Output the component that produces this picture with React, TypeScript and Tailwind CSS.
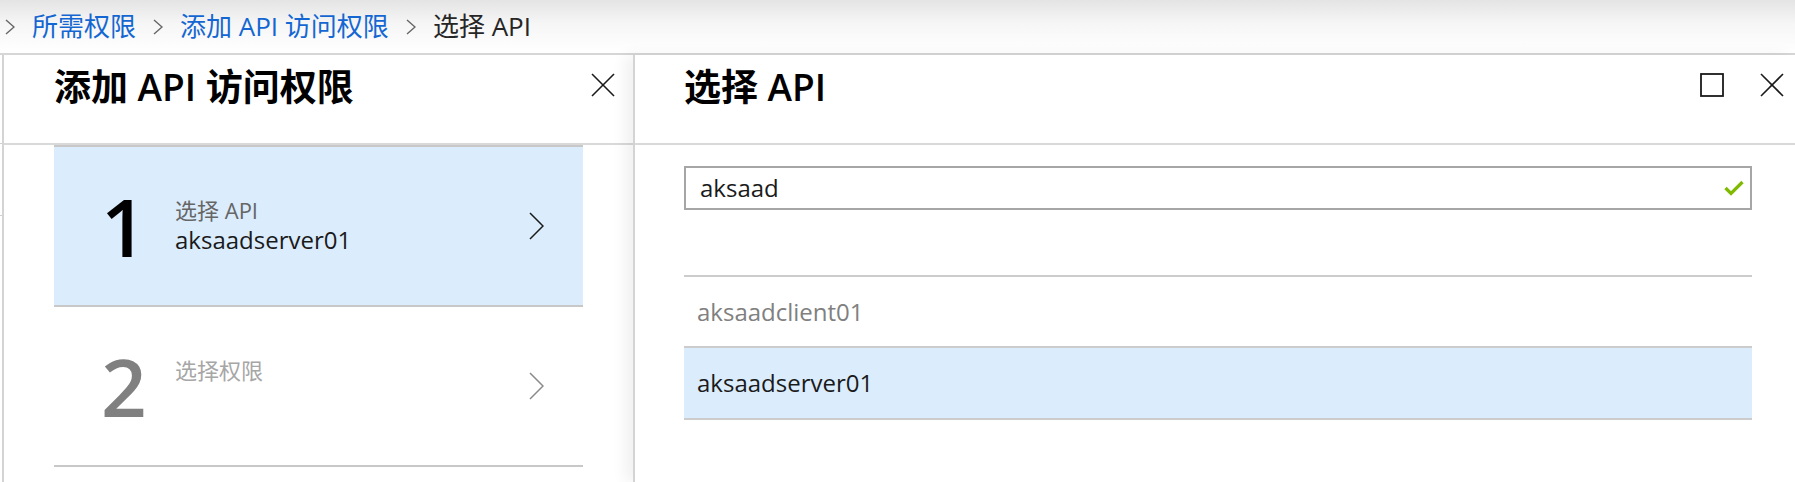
import React from "react";

const font = "font-['Open_Sans','Noto_Sans_CJK_SC',sans-serif]";

function Chev({ className, w = 10, h = 16, sw = 1.4 }: { className?: string; w?: number; h?: number; sw?: number }) {
  return (
    <svg width={w} height={h} viewBox={`0 0 ${w} ${h}`} className={className} fill="none">
      <polyline points={`1,1 ${w - 1},${h / 2} 1,${h - 1}`} stroke="currentColor" strokeWidth={sw} />
    </svg>
  );
}

function CloseIcon() {
  return (
    <svg width="24" height="24" viewBox="0 0 24 24" fill="none">
      <line x1="1" y1="1" x2="23" y2="23" stroke="#1a1a1a" strokeWidth="1.6" />
      <line x1="23" y1="1" x2="1" y2="23" stroke="#1a1a1a" strokeWidth="1.6" />
    </svg>
  );
}

function Step({ n, title, sub, active }: { n: string; title: string; sub?: string; active?: boolean }) {
  return (
    <div
      className={`flex h-[160px] items-center border-b-2 border-[#c8c8c8] ${active ? "bg-[#dbedfd]" : "bg-white"}`}
    >
      <div
        className={`w-[121px] shrink-0 pl-[47px] text-[80px] font-semibold leading-none ${active ? "text-black" : "text-[#808080]"}`}
      >
        {n}
      </div>
      <div className="flex h-[62px] flex-1 flex-col">
        <div className={`text-[22px] leading-[30px] ${active ? "text-[#666666]" : "text-[#a6a6a6]"}`}>{title}</div>
        <div className="text-[24px] leading-[30px] text-[#1a1a1a]">{sub ?? "\u00a0"}</div>
      </div>
      <div className={`pr-[39px] ${active ? "text-[#1a1a1a]" : "text-[#8a8a8a]"}`}>
        <Chev w={15} h={28} sw={1.5} />
      </div>
    </div>
  );
}

export default function App() {
  return (
    <div className={`h-[482px] w-[1795px] overflow-hidden bg-white ${font}`}>
      {/* breadcrumb */}
      <div className="flex h-[55px] items-center gap-[17px] border-b-2 border-[#d6d6d6] bg-[linear-gradient(#e4e4e4,#f6f6f6_45%,#ffffff)] pl-[5px] text-[26px]">
        <Chev className="text-[#666666]" />
        <span className="text-[#1467d2]">所需权限</span>
        <Chev className="text-[#666666]" />
        <span className="text-[#1467d2]">添加 API 访问权限</span>
        <Chev className="text-[#666666]" />
        <span className="text-[#262626]">选择 API</span>
      </div>

      <div className="flex h-[427px]">
        {/* edge of previous blade */}
        <div className="flex w-[2px] shrink-0 flex-col pt-[88px]">
          <div className="h-[1px] bg-[#d0d0d0]" />
          <div className="h-[71px]" />
          <div className="h-[1px] bg-[#d0d0d0]" />
        </div>

        {/* left blade */}
        <div className="flex w-[631px] shrink-0 flex-col border-l-2 border-[#d4d4d4]">
          <div className="flex h-[90px] items-start justify-between border-b-2 border-[#d9d9d9] pl-[50px] pr-[18px]">
            <div className="pt-[10px] text-[37px] font-semibold leading-[44px] text-black">添加 API 访问权限</div>
            <div className="pt-[18px]">
              <CloseIcon />
            </div>
          </div>
          <div className="px-[50px]">
            <div className="border-t-2 border-[#c8c8c8]">
              <Step n="1" title="选择 API" sub="aksaadserver01" active />
              <Step n="2" title="选择权限" />
            </div>
          </div>
        </div>

        {/* right blade */}
        <div className="relative z-10 flex flex-1 flex-col border-l-2 border-[#d4d4d4] bg-white shadow-[-8px_0_14px_rgba(0,0,0,0.06)]">
          <div className="flex h-[90px] items-start justify-between border-b-2 border-[#d9d9d9] pl-[49px] pr-[11px]">
            <div className="pt-[10px] text-[37px] font-semibold leading-[44px] text-black">选择 API</div>
            <div className="flex items-center gap-[36px] pt-[18px]">
              <svg width="24" height="24" viewBox="0 0 24 24" fill="none">
                <rect x="1" y="1" width="22" height="22" stroke="#1a1a1a" strokeWidth="1.8" />
              </svg>
              <CloseIcon />
            </div>
          </div>

          <div className="pl-[49px] pr-[43px]">
            <div className="mt-[21px] flex h-[44px] items-center border-2 border-[#a6a6a6] pl-[14px] pr-[6px]">
              <span className="flex-1 text-[24px] text-[#1a1a1a]">aksaad</span>
              <svg width="20" height="16" viewBox="0 0 20 16" fill="none">
                <polyline points="1.5,8 7,13.5 18.5,2" stroke="#7fba00" strokeWidth="3.2" />
              </svg>
            </div>

            <div className="mt-[65px] border-t-2 border-[#cccccc]">
              <div className="flex h-[71px] items-center border-b-2 border-[#cccccc] pl-[13px] text-[24px] text-[#808080]">
                aksaadclient01
              </div>
              <div className="flex h-[72px] items-center border-b-2 border-[#cccccc] bg-[#dbedfd] pl-[13px] text-[24px] text-[#1a1a1a]">
                aksaadserver01
              </div>
            </div>
          </div>
        </div>
      </div>
    </div>
  );
}
